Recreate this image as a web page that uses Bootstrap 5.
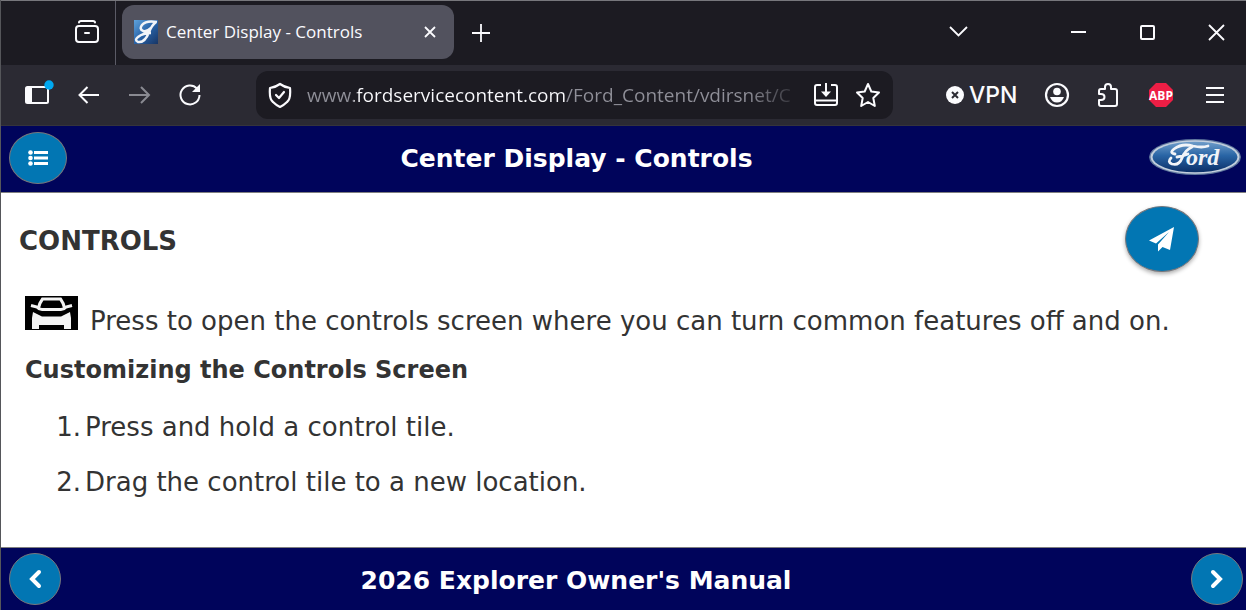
<!DOCTYPE html>
<html lang="en">
<head>
<meta charset="utf-8">
<meta name="viewport" content="width=device-width, initial-scale=1">
<title>Center Display - Controls</title>
<link rel="stylesheet" href="https://cdn.jsdelivr.net/npm/bootstrap@5.3.0/dist/css/bootstrap.min.css">
<style>
  body { font-family: "DejaVu Sans", sans-serif; color: #333; border-left: 1px solid #55565a; }
  svg { display: block; }
  button.plain { background: none; border: 0; padding: 0; color: #fbfbfe; }
  .ui { font-family: "Open Sans", "Noto Sans", sans-serif; color: #fbfbfe; }
  .tabstrip { background: #1c1b22; border-top: 1px solid #77777c; height: 65px; }
  .tabstrip > * { padding-bottom: 2px; }
  .firefox-view { width: 115px; border-right: 1px solid #5b5b66; padding-right: 15px; }
  .tab-item { background: #52525e; border-radius: 12px; width: 332px; height: 54px; margin: 0 0 2px 6px; padding: 0 16px 0 12px; font-size: 17px; }
  .toolbar { background: #2b2a33; height: 61px; border-bottom: 1px solid #35343c; padding-right: 21px; }
  .tools-start { width: 255px; padding-left: 24px; gap: 26px; }
  .urlbox { background: #1c1b22; border-radius: 12px; height: 48px; padding: 0 12px 0 11px; }
  .urlbox input {
    border: 0; outline: 0; padding: 0; min-width: 0; height: 40px; margin-left: 14px; font-size: 19px; color: transparent;
    background-image: linear-gradient(90deg, #8f8f98 0 47px, #fbfbfe 47px 259px, #8f8f98 259px 440px, #1c1b22 498px);
    -webkit-background-clip: text; background-clip: text;
  }
  .tools-end { width: 332px; }
  .vpn { font: 500 23px "Inter", sans-serif; }
  .bar { background: #00045b; color: #fff; }
  .bar-top { height: 67px; border-bottom: 1px solid #808080; padding: 0 5px 2px 8px; }
  .bar-bottom { height: 63px; border-top: 1px solid #808080; padding: 0 3px 0 8px; }
  .bar-title { font-size: 25px; font-weight: 700; line-height: 32px; }
  .page-title { font-size: 26px; font-weight: 700; line-height: 32px; padding-top: 4px; }
  .sub-title { font-size: 24px; font-weight: 700; line-height: 32px; }
  .bar-top .bar-title { padding: 2px 63px 0 0; }
  .bar-bottom .bar-title { padding: 4px 100px 0 0; }
  .round-btn { background: #0276b3; border: 1px solid #77777c; border-radius: 50%; color: #fff; width: 52px; height: 52px; padding: 0; display: flex; align-items: center; justify-content: center; flex: none; }
  .round-btn.menu { width: 58px; }
  .round-btn.send { width: 74px; height: 66px; box-shadow: 0 2px 4px #0005; }
  .page { padding: 13px 47px 0 18px; }
  .copy { font-size: 26px; line-height: 34px; padding-left: 6px; }
  .steps { padding-left: 56px; list-style: steps; }
  .steps li { margin-bottom: 21px; padding-left: 4px; }
  @counter-style steps { system: extends decimal; suffix: "."; }
</style>
</head>
<body class="d-flex flex-column min-vh-100">
<div class="tabstrip ui d-flex align-items-center">
  <div class="firefox-view h-100 d-flex align-items-center justify-content-end flex-shrink-0">
    <button class="plain" aria-label="Recent browsing"><svg width="26" height="26" viewBox="0 0 26 26" fill="none" stroke="currentColor" stroke-width="2" stroke-linecap="round"><path d="M5 3.500Q5 2 7 2H19Q21 2 21 3.500"/><rect x="2" y="7" width="22" height="16" rx="3"/><path d="M11 14H15"/></svg></button>
  </div>
  <div class="tab-item d-flex align-items-center flex-shrink-0">
    <svg class="me-2 flex-shrink-0" width="24" height="24" viewBox="0 0 24 24"><defs><linearGradient id="fav" x2="1" y2="1"><stop stop-color="#5fa3dc"/><stop offset=".5" stop-color="#2863a8"/><stop offset="1" stop-color="#183564"/></linearGradient></defs><path fill="url(#fav)" d="M0 0H24V24H0z"/><path d="M23 2Q12 0 8 5Q5 9 9 11Q13 12 17 8M22 2Q18 5 15 12Q11 23 4 22Q0 20 4 17Q9 13 17 13" fill="none" stroke="#f1f4f8" stroke-width="2.500"/></svg>
    <span class="flex-grow-1 text-nowrap">Center Display - Controls</span>
    <button class="plain" aria-label="Close tab"><svg width="16" height="16" viewBox="0 0 16 16" stroke="currentColor" stroke-width="1.800"><path d="M3 3L13 13M13 3L3 13"/></svg></button>
  </div>
  <button class="plain ms-3" aria-label="New tab"><svg width="24" height="24" viewBox="0 0 24 24" stroke="currentColor" stroke-width="1.800"><path d="M2 12H20M11 3V21"/></svg></button>
  <div class="ms-auto d-flex align-items-center pe-3">
    <button class="plain" aria-label="List all tabs"><svg width="24" height="24" viewBox="0 0 24 24" fill="none" stroke="currentColor" stroke-width="1.800"><path d="M4 7L12.500 15.500L21 7"/></svg></button>
    <button class="plain ms-5 ps-5" aria-label="Minimize"><svg width="24" height="24" viewBox="0 0 24 24" stroke="currentColor" stroke-width="2"><path d="M5 12H20"/></svg></button>
    <button class="plain ms-5" aria-label="Maximize"><svg width="20" height="24" viewBox="0 0 20 24" fill="none" stroke="currentColor" stroke-width="2"><rect x="3" y="6" width="13" height="13" rx="1"/></svg></button>
    <button class="plain ms-5" aria-label="Close"><svg width="24" height="24" viewBox="0 0 24 24" stroke="currentColor" stroke-width="1.800"><path d="M3 5L18 20M18 5L3 20"/></svg></button>
  </div>
</div>
<div class="toolbar ui d-flex align-items-center">
  <div class="tools-start d-flex align-items-center flex-shrink-0">
    <button class="plain" aria-label="Sidebars"><svg class="overflow-visible" width="26" height="26" viewBox="0 0 26 26"><rect x="1" y="5" width="22" height="16" rx="1.500" fill="none" stroke="currentColor" stroke-width="2"/><path fill="currentColor" d="M1 5H7V21H1z"/><circle cx="24" cy="3" r="4.700" fill="#00a8f0"/></svg></button>
    <button class="plain" aria-label="Back"><svg width="24" height="24" viewBox="0 0 24 24" fill="none" stroke="currentColor" stroke-width="2"><path d="M22 12H2M10.500 4L2.500 12L10.500 20"/></svg></button>
    <button class="plain" aria-label="Forward" disabled><svg width="24" height="24" viewBox="0 0 24 24" fill="none" stroke="#8a8a92" stroke-width="2"><path d="M2 12H22M14 4L22 12L14 20"/></svg></button>
    <button class="plain" aria-label="Reload"><svg width="26" height="24" viewBox="0 0 26 24" fill="none" stroke="currentColor" stroke-width="2"><path d="M20 5.500A9.500 9.500 0 1 0 22.500 12"/><path fill="currentColor" stroke="none" d="M23 1V9H15z"/></svg></button>
  </div>
  <div class="urlbox d-flex align-items-center flex-grow-1">
    <svg class="flex-shrink-0" width="26" height="26" viewBox="0 0 26 26" fill="none" stroke="currentColor" stroke-width="2.200" stroke-linecap="round" stroke-linejoin="round"><path d="M13 2Q17 5 23 6Q24 17 20 20Q17 23 13 25Q9 23 6 20Q2 17 3 6Q9 5 13 2z"/><path d="M9 13L12 16L17 10"/></svg>
    <input class="flex-grow-1 ui" aria-label="Address" value="www.fordservicecontent.com/Ford_Content/vdirsnet/C">
    <button class="plain ms-2" aria-label="Install"><svg width="26" height="26" viewBox="0 0 26 26" fill="none" stroke="currentColor" stroke-width="2"><path d="M8 3H4Q2 3 2 5V21Q2 23 4 23H22Q24 23 24 21V5Q24 3 22 3H18M2 18.500H24M13 1V13"/><path fill="currentColor" stroke="none" d="M8 9.500H18L13 15z"/></svg></button>
    <button class="plain ms-3" aria-label="Bookmark"><svg width="26" height="26" viewBox="0 0 26 26" fill="none" stroke="currentColor" stroke-width="2" stroke-linejoin="round"><path d="M13 2L16.300 9.500L24 10.500L18.300 16L19.800 24L13 20L6.200 24L7.700 16L2 10.500L9.700 9.500z"/></svg></button>
  </div>
  <div class="tools-end d-flex align-items-center justify-content-between flex-shrink-0">
    <button class="plain vpn d-flex align-items-center ms-5 ps-1"><svg class="me-1" width="20" height="20" viewBox="0 0 20 20"><circle cx="10" cy="10" r="9" fill="currentColor"/><path d="M7 7L13 13M13 7L7 13" stroke="#2b2a33" stroke-width="2"/></svg>VPN</button>
    <button class="plain" aria-label="Account"><svg width="26" height="26" viewBox="0 0 26 26"><circle cx="13" cy="13" r="11" fill="none" stroke="currentColor" stroke-width="2.200"/><circle cx="13" cy="9.500" r="3.800" fill="currentColor"/><path d="M6 15H20Q18 20.500 13 20.500T6 15z" fill="currentColor"/></svg></button>
    <button class="plain" aria-label="Extensions"><svg width="24" height="26" viewBox="0 0 24 26" fill="none" stroke="currentColor" stroke-width="2" stroke-linejoin="round"><path d="M2 12V9Q2 7 4 7H8V5Q8 2 11 2T14 5V7H18Q20 7 20 9V22Q20 24 18 24H4Q2 24 2 22V18H4Q7.500 18 7.500 15T4 12z"/></svg></button>
    <button class="plain" aria-label="Adblock Plus"><svg width="26" height="26" viewBox="0 0 26 26"><path d="M8 1H18L25 8V18L18 25H8L1 18V8z" fill="#ed1e45"/><text x="13" y="17.500" text-anchor="middle" font-family="Open Sans, sans-serif" font-weight="700" font-size="12" fill="#fff">ABP</text></svg></button>
    <button class="plain" aria-label="Menu"><svg width="24" height="20" viewBox="0 0 24 20" stroke="currentColor" stroke-width="2"><path d="M5 3H23M5 10H23M5 17H23"/></svg></button>
  </div>
</div>
<header class="bar bar-top d-flex align-items-center">
  <button class="round-btn menu" aria-label="Contents"><svg width="20" height="16" viewBox="0 0 20 16" fill="currentColor"><circle cx="2.500" cy="2.500" r="2.300"/><circle cx="2.500" cy="8" r="2.300"/><circle cx="2.500" cy="13.500" r="2.300"/><path d="M6 1H20V4H6zM6 6.500H20V9.500H6zM6 12H20V15H6z"/></svg></button>
  <h1 class="bar-title flex-grow-1 text-center m-0">Center Display - Controls</h1>
  <svg class="flex-shrink-0" width="92" height="40" viewBox="0 0 92 40" role="img" aria-label="Ford"><defs><linearGradient id="oval" x2="0" y2="1"><stop stop-color="#6f9dca"/><stop offset=".45" stop-color="#2965a5"/><stop offset="1" stop-color="#0b2f68"/></linearGradient></defs><ellipse cx="46" cy="19" rx="46" ry="18" fill="#60799f"/><ellipse cx="46" cy="19" rx="44.500" ry="16.800" fill="#c3cfdd"/><ellipse cx="46" cy="19" rx="42.500" ry="15.300" fill="url(#oval)"/><path d="M26 16Q20 15 25 11Q33 5 44 8Q53 10 59 8M43 9Q36 12 33 20Q30 28 23 26Q18 24 22 20M28 19Q35 18 39 16" fill="none" stroke="#f1f4f8" stroke-width="2.800" stroke-linecap="round"/><text x="37" y="27" font-family="Liberation Serif, serif" font-style="italic" font-weight="700" font-size="24" fill="#f1f4f8">ord</text></svg>
</header>
<main class="page flex-grow-1">
  <div class="d-flex justify-content-between align-items-center">
    <h2 class="page-title m-0">CONTROLS</h2>
    <button class="round-btn send" aria-label="Send"><svg width="26" height="26" viewBox="0 0 26 26" fill="currentColor"><path d="M25 1L0 14.500L7 17.500L20 6L9 18.500V25.500L13.500 21L21 24z"/></svg></button>
  </div>
  <div class="copy">
    <p class="d-flex mb-0 mt-4"><svg class="flex-shrink-0 me-2" width="53" height="34" viewBox="0 0 53 34"><path d="M0 0H53V34H0z"/><path d="M13.500 12Q14.500 7 17.500 3H35.500Q38.500 7 39.500 12" fill="none" stroke="#f4f4f4" stroke-width="3"/><path d="M6 9.500L12 11Q14 13.500 17 13.500H36Q39 13.500 41 11L47 9.500" fill="none" stroke="#f4f4f4" stroke-width="3"/><path d="M8 16L17 20.500H36L45 16L46 22V33H39V29H14V33H7V22z" fill="#f4f4f4"/></svg><span class="ps-1 pt-2">Press to open the controls screen where you can turn common features off and on.</span></p>
    <h3 class="sub-title mb-4 mt-3">Customizing the Controls Screen</h3>
    <ol class="steps mb-0">
      <li>Press and hold a control tile.</li>
      <li>Drag the control tile to a new location.</li>
    </ol>
  </div>
</main>
<footer class="bar bar-bottom d-flex align-items-center">
  <button class="round-btn" aria-label="Previous"><svg width="20" height="20" viewBox="0 0 20 20" fill="none" stroke="currentColor" stroke-width="4" stroke-linecap="round"><path d="M14 3L7 10L14 17"/></svg></button>
  <div class="bar-title flex-grow-1 text-center">2026 Explorer Owner's Manual</div>
  <button class="round-btn" aria-label="Next"><svg width="20" height="20" viewBox="0 0 20 20" fill="none" stroke="currentColor" stroke-width="4" stroke-linecap="round"><path d="M6 3L13 10L6 17"/></svg></button>
</footer>
<script src="https://cdn.jsdelivr.net/npm/bootstrap@5.3.0/dist/js/bootstrap.bundle.min.js"></script>
</body>
</html>
